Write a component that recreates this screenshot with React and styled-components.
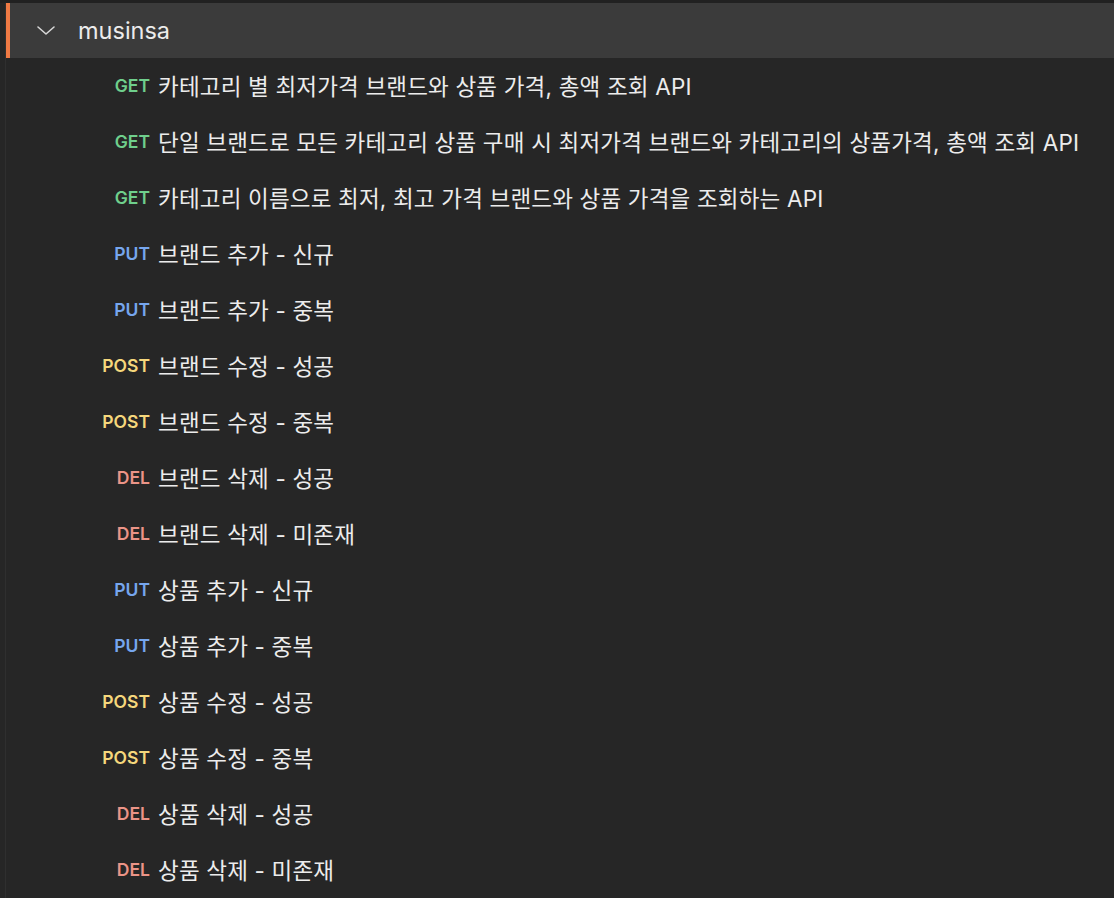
import React from "react";
import styled, {createGlobalStyle} from "styled-components";

const GlobalStyle = createGlobalStyle`
  html, body {
    margin: 0;
    padding: 0;
    background: #262626;
  }
  body {
    font-family: Inter, "Noto Sans CJK KR", sans-serif;
    color: #e9e9e9;
  }
`;

const Page = styled.div`
  min-height: 898px;
  padding-top: 3px;
  background: #262626;
  box-shadow: inset 0 3px 0 #212121;
`;

const Tree = styled.div`
  margin-left: 5px;
  border-left: 1px solid #2f2f2f;
  min-height: 895px;
`;

const Folder = styled.div`
  display: flex;
  align-items: center;
  height: 55px;
  background: #3b3b3b;
  border-left: 4px solid #f07a44;
  padding-left: 26px;
  gap: 22px;
`;

const FolderName = styled.span`
  font-size: 23.5px;
  color: #ececec;
`;

const Row = styled.div`
  display: flex;
  align-items: center;
  height: 56px;
  padding-left: 84px;
  margin-top: -1px;
  margin-bottom: 1px;
`;

const METHOD_COLORS = {
  GET: "#6fcf8c",
  PUT: "#76a6ee",
  POST: "#f5d77c",
  DEL: "#eb9487",
};

const Method = styled.span`
  width: 60px;
  text-align: right;
  font-size: 17.5px;
  font-weight: 600;
  color: ${(p) => METHOD_COLORS[p.$method]};
  margin-right: 8px;
`;

const Name = styled.span`
  font-size: 22.5px;
  letter-spacing: 0.18px;
  color: #ececec;
  white-space: nowrap;
`;

const requests = [
  ["GET", "카테고리 별 최저가격 브랜드와 상품 가격, 총액 조회 API"],
  ["GET", "단일 브랜드로 모든 카테고리 상품 구매 시 최저가격 브랜드와 카테고리의 상품가격, 총액 조회 API"],
  ["GET", "카테고리 이름으로 최저, 최고 가격 브랜드와 상품 가격을 조회하는 API"],
  ["PUT", "브랜드 추가 - 신규"],
  ["PUT", "브랜드 추가 - 중복"],
  ["POST", "브랜드 수정 - 성공"],
  ["POST", "브랜드 수정 - 중복"],
  ["DEL", "브랜드 삭제 - 성공"],
  ["DEL", "브랜드 삭제 - 미존재"],
  ["PUT", "상품 추가 - 신규"],
  ["PUT", "상품 추가 - 중복"],
  ["POST", "상품 수정 - 성공"],
  ["POST", "상품 수정 - 중복"],
  ["DEL", "상품 삭제 - 성공"],
  ["DEL", "상품 삭제 - 미존재"],
];

const Chevron = () => (
  <svg width="20" height="20" viewBox="0 0 20 20" fill="none">
    <path d="M2 6l8 7 8-7" stroke="#d8d8d8" strokeWidth="1.6" strokeLinecap="round" strokeLinejoin="round"/>
  </svg>
);

export default function App() {
  return (
    <Page>
      <GlobalStyle/>
      <Tree>
        <Folder>
          <Chevron/>
          <FolderName>musinsa</FolderName>
        </Folder>
        {requests.map(([method, name], i) => (
          <Row key={i}>
            <Method $method={method}>{method}</Method>
            <Name>{name}</Name>
          </Row>
        ))}
      </Tree>
    </Page>
  );
}
